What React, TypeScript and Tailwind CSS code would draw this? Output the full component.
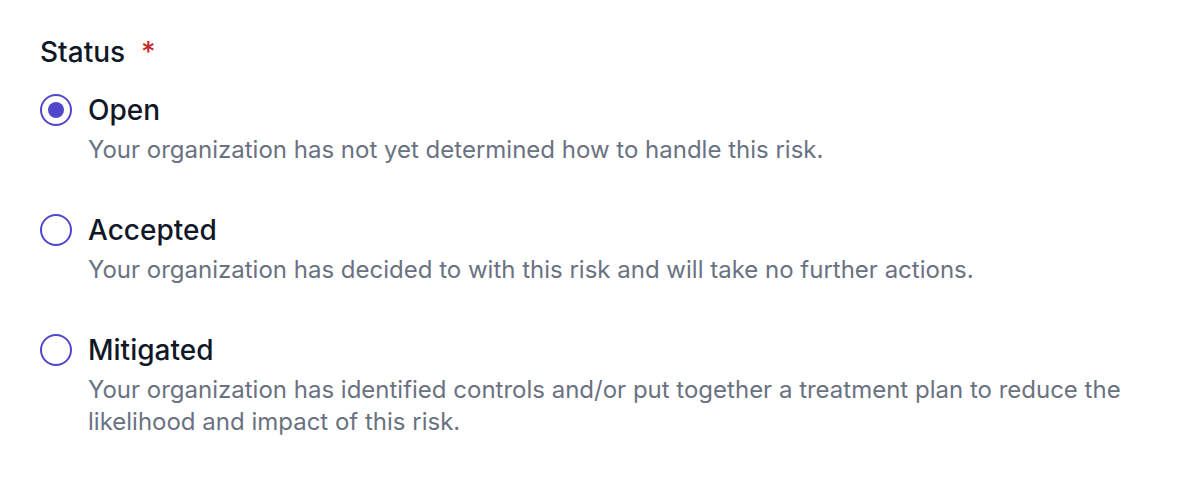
import React, { useState } from 'react';

const OPTIONS = [
  {
    value: 'open',
    label: 'Open',
    description: 'Your organization has not yet determined how to handle this risk.',
  },
  {
    value: 'accepted',
    label: 'Accepted',
    description: 'Your organization has decided to with this risk and will take no further actions.',
  },
  {
    value: 'mitigated',
    label: 'Mitigated',
    description:
      'Your organization has identified controls and/or put together a treatment plan to reduce the likelihood and impact of this risk.',
  },
];

const App = () => {
  const [status, setStatus] = useState('open');

  return (
    <div className="min-h-screen bg-white px-[40px] pt-[32px] font-['Inter',sans-serif] antialiased">
      <div className="flex items-center text-[28px] font-medium leading-[40px] text-gray-900">
        Status
        <span className="ml-[16px] text-[#c62828]">*</span>
      </div>

      <div className="mt-[18px] flex flex-col gap-[44px]">
        {OPTIONS.map(opt => {
          const checked = status === opt.value;
          return (
            <label key={opt.value} className="flex cursor-pointer gap-[16px]">
              <span className="flex h-[40px] shrink-0 items-center">
                <input
                  type="radio"
                  name="status"
                  value={opt.value}
                  checked={checked}
                  onChange={() => setStatus(opt.value)}
                  className="sr-only"
                />
                <span className="flex h-[32px] w-[32px] items-center justify-center rounded-full border-2 border-[#5046cc] bg-white">
                  {checked && <span className="h-[16px] w-[16px] rounded-full bg-[#5046cc]" />}
                </span>
              </span>
              <span className="flex flex-col">
                <span className="text-[28px] font-medium leading-[40px] text-gray-900">{opt.label}</span>
                <span className="mt-[4px] max-w-[1050px] text-[24px] leading-[32px] text-gray-500">
                  {opt.description}
                </span>
              </span>
            </label>
          );
        })}
      </div>
    </div>
  );
};

export default App;
